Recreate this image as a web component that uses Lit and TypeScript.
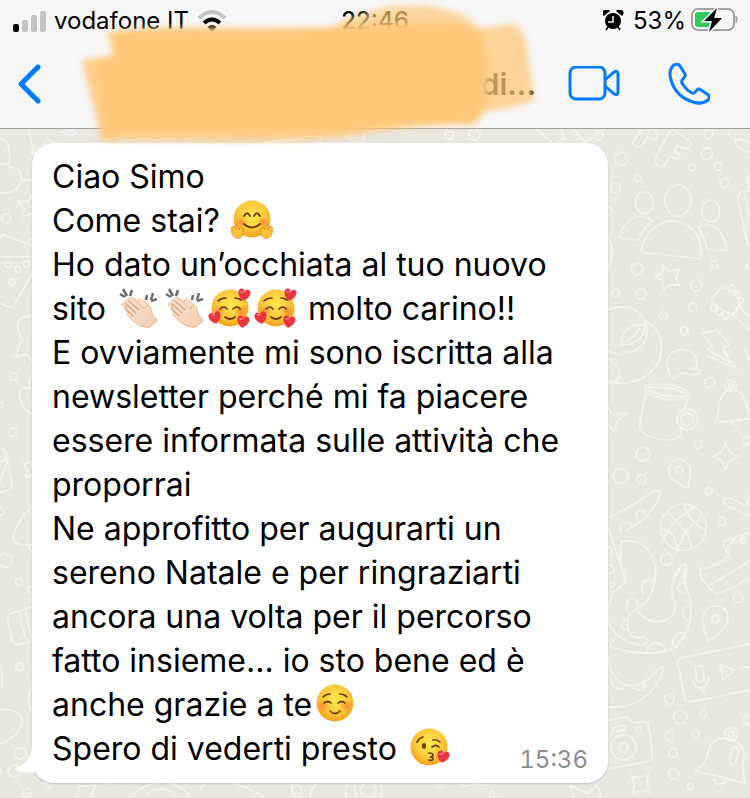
import { LitElement, html, css, svg } from "lit";
import { customElement } from "lit/decorators.js";

const EMOJI_DEFS = svg`
  <radialGradient id="skin" cx="50%" cy="40%" r="60%">
    <stop offset="0" stop-color="#ffe94f"></stop>
    <stop offset="0.6" stop-color="#fdcb3b"></stop>
    <stop offset="1" stop-color="#f0a11c"></stop>
  </radialGradient>
  <radialGradient id="blush">
    <stop offset="0" stop-color="#fb7a2c" stop-opacity="0.8"></stop>
    <stop offset="1" stop-color="#fb8a2c" stop-opacity="0"></stop>
  </radialGradient>
  <linearGradient id="palm" x1="0" y1="0" x2="1" y2="1">
    <stop offset="0" stop-color="#fbe3cf"></stop>
    <stop offset="1" stop-color="#f3cdb0"></stop>
  </linearGradient>`;

const HEART = "M0 6C-8 1-7-6-3-6C-1-6 0-4 0-3C0-4 1-6 3-6C7-6 8 1 0 6Z";
const heart = (x: number, y: number, turn: number) => svg`
  <path d=${HEART} fill="#ec3440" transform="translate(${x} ${y}) rotate(${turn})"></path>
  <ellipse cx=${x - 2} cy=${y - 3} rx="2" ry="1" fill="#ff7b82"></ellipse>`;

const ART: Record<string, unknown> = {
  hug: svg`
    <circle cx="23" cy="21" r="18.5" fill="url(#skin)"></circle>
    <circle cx="12" cy="24" r="6" fill="url(#blush)"></circle>
    <circle cx="34" cy="24" r="6" fill="url(#blush)"></circle>
    <g fill="none" stroke="#6b3c0a" stroke-width="1.8" stroke-linecap="round">
      <path d="M15 18q3-5.500 6 0M25 18q3-5.500 6 0M15 26q8 7 16 0"></path>
    </g>
    <path d="M3 29c1-2 2-1 4 3c-2-5-1-6 1-5l2 5c1-2 3-4 4-2c1 2 0 9-3 10c-4 1-7-1-8-5c-1-2-1-3 1-2c-2-2-2-3-1-4Z" fill="#fdc13a" stroke="#d98a18" stroke-width="0.8"></path>
    <path d="M43 29c-1-2-2-1-4 3c2-5 1-6-1-5l-2 5c-1-2-3-4-4-2c-1 2 0 9 3 10c4 1 7-1 8-5c1-2 1-3-1-2c2-2 2-3 1-4Z" fill="#fdc13a" stroke="#d98a18" stroke-width="0.8"></path>`,
  clap: svg`
    <path d="M5 8l5 3M8 3l4 7M17 4l-2 6M32 9l-1 5M38 7l-2 7M42 13l-6 2" stroke="#6e6e6e" stroke-width="2.600" fill="none"></path>
    <path d="M15 13c2-2 5 0 9 3l-1-2c2-2 5 0 9 4c2 2 3 5 3 8l7 9l-8 6l-9-1Z" fill="url(#palm)" stroke="#e0b795" stroke-width="0.8"></path>
    <path d="M7 19c0-2 2-3 4-1l-1-1c-1-3 2-4 4-2l-1-1c0-3 3-3 5-1l12 10c1-3 1-4 3-4c4 1 3 7 5 11l4 4l-7 7c-9 1-14-3-22-11c-2-2-1-4 1-3l-3-3c-2-2-1-4 1-3Z" fill="url(#palm)" stroke="#dfb490" stroke-width="0.800"></path>
    <path d="M11 18l10 9M14 15l10 9M10 22l8 8" stroke="#d7a47c" stroke-width="1.100" fill="none"></path>`,
  love: svg`
    <circle cx="23" cy="22" r="18.500" fill="url(#skin)"></circle>
    <circle cx="12" cy="25" r="7" fill="url(#blush)"></circle>
    <circle cx="34" cy="25" r="7" fill="url(#blush)"></circle>
    <g fill="none" stroke="#6b3c0a" stroke-width="1.700" stroke-linecap="round">
      <path d="M13 23q4-4 7 0M26 23q4-4 7 0M18 31q5 4 10 0M11 15q3-3 8-3M28 12q3 0 6 2"></path>
    </g>
    ${heart(37, 9, 12)} ${heart(8, 32, -14)} ${heart(36, 36, 10)}`,
  relaxed: svg`
    <circle cx="23" cy="21" r="18.500" fill="url(#skin)"></circle>
    <circle cx="11" cy="24" r="7" fill="url(#blush)"></circle>
    <circle cx="35" cy="24" r="7" fill="url(#blush)"></circle>
    <g fill="none" stroke="#6b3c0a" stroke-width="1.700" stroke-linecap="round">
      <path d="M12 21q4-3 7 0M26 21q4-3 7 0M18 29q5 5 10 0M11 15q3-3 7-3M28 12q4 0 7 3"></path>
    </g>`,
  kiss: svg`
    <circle cx="23" cy="21" r="18.500" fill="url(#skin)"></circle>
    <ellipse cx="18" cy="20" rx="2" ry="3" fill="#6b3c0a"></ellipse>
    <g fill="none" stroke="#6b3c0a" stroke-width="1.700" stroke-linecap="round">
      <path d="M26 21q4-3 7 0M11 16q2-4 6-5M27 14q4-1 7 2M23 27q4 0 4 2t-3 2q3 0 3 2t-4 1"></path>
    </g>
    ${heart(37, 31, 12)}`,
};

const emoji = (name: string, label: string) => html`<svg
  class="emoji" viewBox="0 1 46 42" role="img" aria-label=${label}>${ART[name]}</svg>`;

const star4 = (x: number, y: number, turn: number) => svg`
  <path transform="translate(${x} ${y}) rotate(${turn})"
    d="M0-42Q6-8 40 0Q8 8 0 40Q-8 8-40 0Q-8-8 0-42Z"></path>`;

const dots = (list: number[][]) =>
  list.map(([x, y, r]) => svg`<circle cx=${x} cy=${y} r=${r}></circle>`);

const WALLPAPER = svg`
  <g transform="translate(600 1) scale(0.33333)">
    ${dots([[64, 87, 20], [326, 12, 13], [321, 71, 17], [277, 112, 10], [354, 109, 12], [113, 143, 10],
      [46, 173, 15], [373, 158, 13], [25, 243, 13], [112, 417, 18], [342, 404, 12], [289, 467, 17],
      [48, 488, 12], [123, 492, 16], [190, 557, 12], [279, 532, 13], [253, 602, 12], [452, 407, 13]])}
    <path d="M98 38L128-6M98 38q10 20 28 10L142 20l16 8q14 2 16-12l-10-14"></path>
    <path d="M214-6L164 88q4 24 26 22l20-32l16 8q12 4 14-12l-18-12l10-16l22 10q18 2 18-20L214-6"></path>
    <path d="M388 8q-4 18 16 16q0 34 48 44M410 30q16-8 40 10"></path>
    <ellipse cx="234" cy="211" rx="39" ry="47"></ellipse>
    <ellipse cx="133" cy="218" rx="27" ry="33"></ellipse>
    <ellipse cx="332" cy="243" rx="27" ry="33"></ellipse>
    <path d="M124 361q14-74 86-88q94 4 96 108q-4 6-14 4L130 368Z"></path>
    <path d="M159 272q-74-40-101 49q0 4 6 4l50 6q16-40 45-59Z"></path>
    <path d="M292 290q70-26 90 70l-62-2q-4-40-28-68Z"></path>
    <path d="M186 404l20 20l32-6l-10 28l12 20l-30-2l-18 16l-4-28l-22-12l24-12Z"></path>
    <path d="M348 490q20-30 58 0q10 14 12 34l-20 30q-36-12-58-36q-12-14 8-28ZM418 530l40 40M402 556l52 52"></path>
    <path d="M388 484q-6-16 8-20q10 6 6 22M402 498q4-16 16-14q6 12-6 22M414 512q6-12 16-6q2 10-10 16M336 526q-8 16 4 18q10-2 12-14M352 536q-8 18 4 20q10-2 14-14M370 546q-6 20 6 22q10-4 10-16"></path>
    <path d="M304 610l48-10l38 46l-20 6l24 48l-72-42l16-10Z"></path>
    <path d="M450 132q-14 20 0 50M450 182l-24 4q-12 4-12 20l28 136q4 8 10 10M436 200l14 70"></path>
    <path d="M20 540q90-30 118 40q14 70-50 88q-40 10-68-10"></path>
    <path d="M62 642q4-60 72-58q2 56-72 62ZM62 642q30-10 56-44M142 576q54 30 38 110q-40 90-160 70"></path>
    <path d="M24 320q24 40 0 100M24 684q40 20 34 60q-10 12-34 12"></path>
    <path d="M222 748q-30-30-18-66q30-40 80-10q20 40-10 44q40 0 20 16q-10 4-28 0q-26-10-44 16ZM320 676l90 40l-40-50"></path>
  </g>
  <g transform="translate(600 221) scale(0.33333)">
    ${dots([[329, 98, 15], [295, 284, 12], [129, 313, 21], [62, 378, 22], [125, 388, 14], [237, 360, 11],
      [327, 423, 11], [366, 513, 12], [200, 628, 18], [439, 272, 12], [393, 107, 17], [393, 107, 7],
      [25, 602, 11], [28, 658, 14], [250, 532, 69], [430, 571, 8]])}
    <ellipse cx="202" cy="126" rx="68" ry="22" transform="rotate(9 202 126)"></ellipse>
    <ellipse cx="202" cy="126" rx="60" ry="12" transform="rotate(9 202 126)"></ellipse>
    <path d="M138 124L118 224q0 30 60 44q50 8 66-14l-2-22M264 146l-10 30"></path>
    <circle cx="262" cy="208" r="31"></circle><circle cx="262" cy="208" r="19"></circle>
    <path d="M20 160l16 34l46-4l-32 24l-6 32l-24-28"></path>
    <path d="M376 126q30-20 56 16q10 30 20 60M376 126q-22 20-20 50q0 20-12 42l106-12M390 214q16 26 32-6"></path>
    ${star4(377, 319, 0)}
    <path d="M262 414q-70-30-54-64q30-44 62 0q4 30-8 64Z"></path>
    <path d="M200 488q60 40 76 106M184 538q40 0 48 62M252 464q20 60 64 74M284 472q-70 40-94 94M308 500q-50 30-72 88"></path>
    <path d="M24 502q70-30 140-80q18-4 16 14q-20 60-100 106M64 550q-14-28 14-34q16 0 16 14M110 500q-4-22 16-20q10 2 8 12"></path>
    <path d="M24 530l50 154M64 574q90-10 102 80q2 20-4 36M64 574q-10 60 14 116"></path>
    <path d="M450 432l-12 36l-52-26q-16 4-14 20l78 38M450 548l-80 26q0 28 20 38q-34 40-90 44q0 20 6 34M376 604l30-42M450 630l-90 60"></path>
    <path d="M216 690q20-44 40-48q10 20-6 48M436-10l14 50"></path>
  </g>
  <g transform="translate(600 441) scale(0.33333)">
    ${dots([[415, 84, 14], [346, 147, 11], [208, 387, 15], [241, 442, 20], [309, 430, 10], [209, 498, 13],
      [287, 494, 11], [219, 548, 13], [221, 612, 16], [271, 649, 8], [70, 532, 37], [70, 532, 14],
      [115, 478, 8], [393, 492, 20], [393, 492, 8], [37, 44, 7], [447, 449, 16]])}
    <path d="M76 0q10 40-36 66q-30 60-6 110q40 50 98 48q20-18-2-22q-50 12-48-50q0-20 26-34q60-30 58-118"></path>
    <path d="M106 118q50 60 104 24q30-24 8-60q-10-40 22-82M252 0q-2 40 16 80q20 90-40 150q-70 40-200 0l14-20"></path>
    <path d="M130 72q-14-30 10-42q14 0 18 10M82 120q-10-26 12-34q18 0 20 20M82 180q-20 0-16-20q6-12 18-8M140 248q4-30 30-30q24 4 28 28M218 224q0-40 40-36M268 152q-30-10-14-40q6-6 12-2M254 72q-30-10-16-30q6-6 14-2"></path>
    <path d="M26 260q0 60 50 86q50 10 90-40q30-30 24-4q-50 120-164 108M34 328q0 34 36 28M98 352q20 16 34 4q4-14-4-24"></path>
    <path d="M298 0q10 40 50 72q30-6 102-50M330 44L404 0"></path>
    <path d="M324 212q-40-100 20-104q40 0 40 40q-10 40-60 64Z"></path>
    <path d="M450 222l-206 42q-12 4-10 20l20 100q4 14 20 12l176-36M360 284l44 16l-34 30ZM428 294l22-4"></path>
    <rect x="288" y="286" width="22" height="50" rx="11" transform="rotate(-8 299 311)"></rect>
    <path d="M280 334q4 22 26 20q18-4 20-32M308 354l4 14"></path>
    <path d="M22 452l60-12l16 18l36-4q10 2 12 14l12 88q0 14-14 18L20 598M40 474q-6 14 10 10l24-4q12-14-4-14Z"></path>
    ${star4(122, 642, 40)}
    <path d="M286 602q36-20 38-60q10-36 52-38q60 10 56 60q-8 30 4 76ZM340 626q10 28 38 10"></path>
    <rect x="392" y="530" width="20" height="54" rx="10" transform="rotate(10 402 556)"></rect>
  </g>
  <g transform="translate(0 1) scale(0.33333)">
    ${dots([[18, 265, 13], [24, 403, 9], [53, 418, 9], [80, 402, 9], [36, 456, 9], [41, 740, 12],
      [0, 826, 8], [40, 907, 13], [0, 975, 20]])}
    <path d="M0 24q34 10 28 78M6 102q22-4 24 10q30-4 34 34q-10 50-64 42M64 150h36M86 0l16 70q14-6 30-24M92 68l20 10M140 20q10 20 40 20"></path>
    <path d="M96 196q-10 14-10 20q-20-6-32-2q8 14 20 22q-10 12-6 24q14-6 32-10"></path>
    <path d="M0 380h98M0 332l8-20l90 36M76 342q6-14 20-16M98 430L38 530q-16 4-38-12M96 558q-50 0-42 40l12 30l-20 52l34-8l16 22M96 736q-14 20-6 40q-40-10-30 30q10 40 38 44M98 584v16"></path>
  </g>
  <g transform="translate(0 331) scale(0.33333)">
    ${dots([[15, 301, 21], [0, 155, 11], [57, 366, 11], [95, 390, 12], [59, 620, 12], [61, 880, 17],
      [42, 934, 18], [80, 998, 13], [0, 932, 4]])}
    <path d="M0 66L22 0l14 70q4 20-36 28M98 6l-28 4l14 20l-6 24l20-10M98 140q-40 30-60 90q-2 30 60 24M84 256l12 20"></path>
    <path d="M98 442l-66 18q-12 6-8 24l12 56q6 16 22 12l40-8M60 454q4 60 24 94M78 452q4 50 22 90M98 684q-20 10-8 64M0 748q60 0 66 30q0 50-66 74M0 684h4q6-10 0-60"></path>
  </g>
  <g transform="translate(0 0) scale(0.33333)">
    ${dots([[598, 16, 12], [673, 15, 18], [1070, 20, 24], [1348, 18, 13], [1423, 17, 17], [1795, 19, 14]])}
    <path d="M190 8q20-10 40 4q-20 14-40-4M320 50q0-40 40-42l40 10M800 40l150-20q18 4 10 16M1610 0l50 46l34-18l-10-28M1720 0l36 40l60-40"></path>
  </g>
  <g transform="translate(0 611) scale(0.33333)">
    ${dots([[890, 152, 16], [1319, 128, 10], [1105, 150, 42], [1105, 150, 24]])}
    <path d="M230 172l10-34l46-2l-14 36M136 130l14 14l8-16M320 128q10 8 24 0M390 172q60-60 130-40q30 10 50 40M440 160q50-30 100 12M600 150q10-24 40-26q90 0 150 50M880 124q-10 30 8 44M930 172q4-40 30-44M1040 172q-10-30 14-44M1370 128q20 20 60 0q20 20 40 0M1470 172l4-20l16 20M1720 172l-8-36l50 24l30-24l10 36"></path>
  </g>`;

@customElement("app-root")
export class AppRoot extends LitElement {
  static styles = css`
    :host {
      display: flex;
      flex-direction: column;
      min-height: 100vh;
      background: #eae6e0;
      color: #000;
      font-family: Inter, "Liberation Sans", sans-serif;
    }
    .top {
      position: relative;
      z-index: 1;
      background: #f6f6f6;
      border-bottom: 1px solid #a3a19f;
    }
    .status {
      display: grid;
      grid-template-columns: 1fr auto 1fr;
      align-items: center;
      padding: 0 12px;
      font-size: 24px;
      line-height: 42px;
    }
    .side {
      display: flex;
      align-items: center;
      gap: 8px;
    }
    .end {
      justify-content: flex-end;
      gap: 4px;
    }
    .clock {
      font-weight: 500;
    }
    .nav {
      display: flex;
      align-items: center;
      height: 84px;
      padding: 0 40px 2px 15px;
    }
    button {
      display: flex;
      padding: 0;
      border: 0;
      background: none;
      color: #007aff;
    }
    .title {
      flex: 1;
      margin: 0;
      text-align: right;
      font-size: 30px;
      line-height: 40px;
      font-weight: 600;
    }
    .video {
      margin: 0 48px 0 32px;
    }
    .smear {
      position: absolute;
      top: 0;
      left: 0;
      width: 100%;
      height: 148px;
      pointer-events: none;
    }
    .chat {
      position: relative;
      flex: 1;
      padding: 14px 142px 15px 32px;
    }
    .paper {
      position: absolute;
      inset: 0;
      width: 100%;
      height: 100%;
      fill: none;
      stroke: #f4f2ee;
      stroke-width: 6px;
      stroke-linejoin: round;
      stroke-linecap: round;
    }
    .bubble {
      position: relative;
      padding: 12px 20px;
      border-radius: 22px;
      background: #fff;
      box-shadow: 0 1px 2px rgba(0, 0, 0, 0.16);
    }
    .tail {
      position: absolute;
      left: -18px;
      bottom: 0;
      width: 50px;
      height: 52px;
    }
    .text {
      position: relative;
      margin: 0;
      font-size: 32px;
      line-height: 44px;
      white-space: nowrap;
    }
    .emoji {
      width: 46px;
      height: 42px;
      vertical-align: -9px;
      overflow: visible;
    }
    .defs {
      position: absolute;
      width: 0;
      height: 0;
    }
    .sent {
      position: absolute;
      right: 20px;
      bottom: 8px;
      color: #8c8c91;
      font-size: 24px;
      line-height: 30px;
      font-variant-numeric: tabular-nums;
    }
  `;

  render() {
    return html`
      <header class="top">
        <div class="status">
          <div class="side">
            <svg width="34" height="22" viewBox="0 0 34 22" aria-hidden="true">
              <rect x="1" y="14" width="6" height="8" rx="2"></rect>
              <g fill="#c4c4c4">
                <rect x="10" y="10" width="6" height="12" rx="2"></rect>
                <rect x="19" y="5" width="6" height="17" rx="2"></rect>
                <rect x="28" y="1" width="6" height="21" rx="2"></rect>
              </g>
            </svg>
            <span>vodafone IT</span>
            <svg width="30" height="22" viewBox="0 0 30 22" fill="none" stroke-width="4" aria-hidden="true">
              <path d="M2 8Q15-4 28 8" stroke="#c4c4c4"></path>
              <path d="M7 13Q15 6 23 13" stroke="#000"></path>
              <path d="M10.500 17q4.500-4 9 0L15 22Z" fill="#000"></path>
            </svg>
          </div>
          <time class="clock">22:46</time>
          <div class="side end">
            <svg width="26" height="22" viewBox="0 0 26 22" aria-hidden="true">
              <circle cx="10" cy="11" r="8"></circle>
              <path d="M1 5a3 3 0 0 1 5-4ZM19 5a3 3 0 0 0-5-4ZM5 17l-2 3M15 17l2 3" stroke="#000" stroke-width="1.500"></path>
              <path d="M10 6v6H5" fill="none" stroke="#f6f6f6" stroke-width="1.500"></path>
            </svg>
            <span>53%</span>
            <svg width="48" height="26" viewBox="0 1 48 26" aria-hidden="true">
              <rect x="2" y="2" width="42" height="21" rx="6" fill="none" stroke="#a3a3a3" stroke-width="2"></rect>
              <rect x="5" y="5" width="19" height="15" rx="3" fill="#34c759"></rect>
              <path d="M46 9q3 3 0 7Z" fill="#a3a3a3" stroke="#a3a3a3"></path>
              <path d="M27 1L14 14h8l-3 11L32 11h-8Z" stroke="#f6f6f6" stroke-width="3" paint-order="stroke"></path>
            </svg>
          </div>
        </div>
        <nav class="nav">
          <button aria-label="Indietro">
            <svg width="28" height="40" viewBox="0 0 28 40" fill="none" stroke="currentColor" stroke-width="5" stroke-linecap="round" stroke-linejoin="round">
              <path d="M23 3L6 20L23 37"></path>
            </svg>
          </button>
          <h1 class="title">(di...</h1>
          <button class="video" aria-label="Videochiamata">
            <svg width="52" height="36" viewBox="0 1 52 36" fill="none" stroke="currentColor" stroke-width="3" stroke-linejoin="round">
              <rect x="2" y="2" width="35" height="32" rx="6"></rect>
              <path d="M37 15L46 7q4-2 4 2v18q0 4-4 2L37 21"></path>
            </svg>
          </button>
          <button aria-label="Chiama">
            <svg width="42" height="42" viewBox="0 1 42 42" fill="none" stroke="currentColor" stroke-width="3" stroke-linejoin="round">
              <path d="M6 3q4-2 6 1l5 8q1 2-2 5q-2 2-1 4q4 7 10 10q2 1 4-2q2-3 5-1l6 4q4 2 1 6q-6 5-15 2Q8 35 3 18Q0 8 6 3Z"></path>
            </svg>
          </button>
        </nav>
        <svg class="smear" viewBox="0 0 750 148" preserveAspectRatio="none" aria-hidden="true">
          <defs>
            <filter id="soft" x="-5%" y="-10%" width="110%" height="120%">
              <feGaussianBlur stdDeviation="3"></feGaussianBlur>
            </filter>
          </defs>
          <g fill="#ffc778" filter="url(#soft)">
            <path d="M470 30L512 24Q522 26 526 44L534 98Q532 106 470 114Z" opacity="0.75"></path>
            <path d="M82 60L112 56L116 140L102 140Q94 110 82 60Z" opacity="0.85"></path>
            <path d="M330 30Q345 17 370 12Q390 4 425 6Q466 10 480 30V60H330Z" opacity="0.7"></path>
            <path d="M100 120H480Q480 124 466 125Q420 125 372 132Q340 141 240 142L104 141Z" opacity="0.7"></path>
            <path d="M108 33Q130 27 220 28Q310 29 350 26Q400 24 440 22Q466 22 482 34Q490 70 486 104Q482 120 470 123Q420 123 370 129Q330 135 240 134L106 134L96 60L114 54Z"></path>
          </g>
        </svg>
      </header>
      <main class="chat">
        <svg class="paper" viewBox="0 0 750 669" preserveAspectRatio="xMidYMid slice" aria-hidden="true">${WALLPAPER}</svg>
        <article class="bubble">
          <svg class="tail" viewBox="0 0 50 52" aria-hidden="true">
            <path d="M18 0V14Q18 32 1 37Q0 38 2 39Q12 43 23 41Q32 51 46 51L50 0Z" fill="#fff"></path>
          </svg>
          <svg class="defs" aria-hidden="true"><defs>${EMOJI_DEFS}</defs></svg>
          <p class="text">
            Ciao Simo<br />
            Come stai? ${emoji("hug", "🤗")}<br />
            Ho dato un’occhiata al tuo nuovo<br />
            sito ${emoji("clap", "👏🏻")}${emoji("clap", "👏🏻")}${emoji("love", "🥰")}${emoji("love", "🥰")} molto carino!!<br />
            E ovviamente mi sono iscritta alla<br />
            newsletter perché mi fa piacere<br />
            essere informata sulle attività che<br />
            proporrai<br />
            Ne approfitto per augurarti un<br />
            sereno Natale e per ringraziarti<br />
            ancora una volta per il percorso<br />
            fatto insieme... io sto bene ed è<br />
            anche grazie a te${emoji("relaxed", "☺️")}<br />
            Spero di vederti presto ${emoji("kiss", "😘")}
          </p>
          <time class="sent">15:36</time>
        </article>
      </main>
    `;
  }
}
